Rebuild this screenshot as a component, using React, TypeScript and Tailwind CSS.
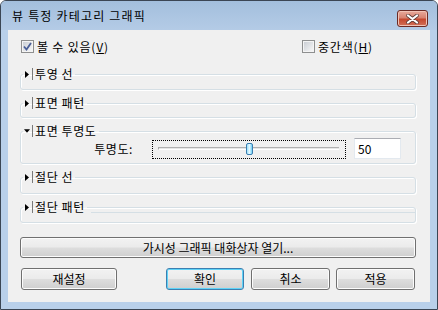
import type { ReactNode } from "react"

const btn =
  "flex items-center justify-center rounded-[3px] border text-[12px] leading-none text-black bg-[linear-gradient(180deg,#f2f2f2_0%,#ebebeb_48%,#dddddd_52%,#cfcfcf_100%)]"

function Checkbox({ checked }: { checked: boolean }) {
  return (
    <span className="flex h-[13px] w-[13px] shrink-0 items-center justify-center border border-[#8e8f8f] bg-white">
      <span className="flex h-[11px] w-[11px] items-center justify-center border border-[#f4f4f4] bg-[linear-gradient(135deg,#cbcfd5_0%,#f6f6f6_100%)]">
        {checked && (
          <svg width="9" height="9" viewBox="0 0 9 9">
            <path d="M1 4.5 L3.5 7.5 L8 1" fill="none" stroke="#4a5f97" strokeWidth="1.8" />
          </svg>
        )}
      </span>
    </span>
  )
}

function Arrow({ open }: { open: boolean }) {
  return open ? (
    <svg width="7" height="4" viewBox="0 0 7 4" className="mx-[1px]">
      <path d="M0 0 H7 L3.5 4 Z" fill="#000" />
    </svg>
  ) : (
    <svg width="4" height="7" viewBox="0 0 4 7" className="mx-[2px]">
      <path d="M0 0 V7 L4 3.5 Z" fill="#000" />
    </svg>
  )
}

function Group({
  title,
  open = false,
  height,
  className = "",
  children,
}: {
  title: string
  open?: boolean
  height: string
  className?: string
  children?: ReactNode
}) {
  return (
    <fieldset
      className={`rounded-[3px] border border-[#d5dfe5] shadow-[inset_1px_1px_0_#fff,1px_1px_0_#fff] ${height} ${className}`}
    >
      <legend className="ml-[2px] pr-[2px]">
        <span className="flex h-[14px] items-center">
          <span className="flex w-[8px] justify-start">
            <Arrow open={open} />
          </span>
          <span className="ml-[1px] mr-[2px] h-[12px] w-[1px] bg-[#7a7a7a]" />
          <span className="text-[12px] leading-[14px] tracking-[0.6px]">{title}</span>
        </span>
      </legend>
      {children}
    </fieldset>
  )
}

export default function App() {
  return (
    <div className="h-[310px] w-[438px] bg-white font-['Noto_Sans_CJK_KR','Liberation_Sans',sans-serif] text-black">
      <div className="flex h-[310px] w-[438px] flex-col rounded-t-[6px] border border-[#3b4654] bg-[#b9d0ea] shadow-[inset_0_1px_0_#dfeaf6]">
        <div className="flex h-[29px] shrink-0 items-start rounded-t-[5px] bg-[linear-gradient(180deg,#a3bfdd_0%,#b4cbe6_100%)]">
          <span className="ml-[11px] mt-[8px] text-[12px] leading-[14px] tracking-[1.2px]">
            뷰 특정 카테고리 그래픽
          </span>
          <div className="ml-auto mr-[9px] mt-[9px] flex h-[17px] w-[31px] items-center justify-center rounded-[3px] border border-[#6b2a24] bg-[linear-gradient(180deg,#e8aa9c_0%,#d88371_45%,#c5482f_55%,#d27058_100%)] shadow-[inset_0_0_0_1px_#f0c2b5]">
            <svg width="13" height="10" viewBox="0 0 13 10">
              <path d="M2 1.5 L11 8.5 M11 1.5 L2 8.5" stroke="#5a3a36" strokeWidth="3.6" strokeLinecap="round" />
              <path d="M2 1.5 L11 8.5 M11 1.5 L2 8.5" stroke="#fff" strokeWidth="2.2" strokeLinecap="round" />
            </svg>
          </div>
        </div>

        <div className="mx-[7px] mb-[7px] flex flex-1 flex-col bg-[#f0f0f0] pl-[12px] pr-[14px] pt-[10px]">
          <div className="flex h-[13px] items-center pl-[1px] text-[12px] leading-[14px] tracking-[0.8px]">
            <div className="flex w-[281px] items-center">
              <Checkbox checked />
              <span className="ml-[3px]">
                볼 수 있음(<u>V</u>)
              </span>
            </div>
            <div className="flex items-center">
              <Checkbox checked={false} />
              <span className="ml-[3px]">
                중간색(<u>H</u>)
              </span>
            </div>
          </div>

          <Group title="투영 선" height="h-[23px]" className="mt-[14px]" />
          <Group title="표면 패턴" height="h-[22px]" className="mt-[6px]" />
          <Group title="표면 투명도" open height="h-[40px]" className="mt-[6px]">
            <div className="flex h-[21px] items-center">
              <span className="w-[112px] text-right text-[12px] leading-[14px] tracking-[0.6px]">투명도:</span>
              <div className="ml-[19px] mt-[2px] h-[19px] w-[194px] border border-dotted border-black">
                <div className="relative ml-[5px] mt-[6px] h-[3px] w-[181px] border-t border-[#b0b0b0] border-b-white border-b border-l border-l-[#a9a9a9] bg-[#e6e6e6]">
                  <div className="absolute left-[87px] top-[-5px] h-[12px] w-[7px] rounded-[2px] border border-[#3c7fb1] bg-[linear-gradient(90deg,#9fe3fb_0%,#e6f8ff_50%,#6fd0f6_100%)]" />
                </div>
              </div>
              <div className="ml-[8px] flex h-[21px] w-[47px] items-center border border-[#e3e9ef] border-t-[#abadb3] bg-white pl-[3px] text-[12px] leading-none">
                50
              </div>
            </div>
          </Group>
          <Group title="절단 선" height="h-[24px]" className="mt-[6px]" />
          <Group title="절단 패턴" height="h-[23px]" className="mt-[6px]">
            <div className="-mt-[2px] ml-[70px] border-t border-[#d5dfe5]" />
          </Group>

          <button className={`${btn} mt-[14px] h-[21px] w-[396px] border-[#707070] shadow-[inset_0_0_0_1px_#fcfcfc]`}>
            가시성 그래픽 대화상자 열기...
          </button>

          <div className="mt-[10px] flex h-[22px] pl-[1px]">
            <button className={`${btn} h-[22px] w-[96px] border-[#707070] shadow-[inset_0_0_0_1px_#fcfcfc]`}>
              재설정
            </button>
            <button className={`${btn} ml-[49px] h-[22px] w-[78px] border-[#3c7fb1] shadow-[inset_0_0_0_1px_#5fd3f7]`}>
              확인
            </button>
            <button className={`${btn} ml-[7px] h-[22px] w-[79px] border-[#707070] shadow-[inset_0_0_0_1px_#fcfcfc]`}>
              취소
            </button>
            <button className={`${btn} ml-[6px] h-[22px] w-[79px] border-[#707070] shadow-[inset_0_0_0_1px_#fcfcfc]`}>
              적용
            </button>
          </div>
        </div>
      </div>
    </div>
  )
}
